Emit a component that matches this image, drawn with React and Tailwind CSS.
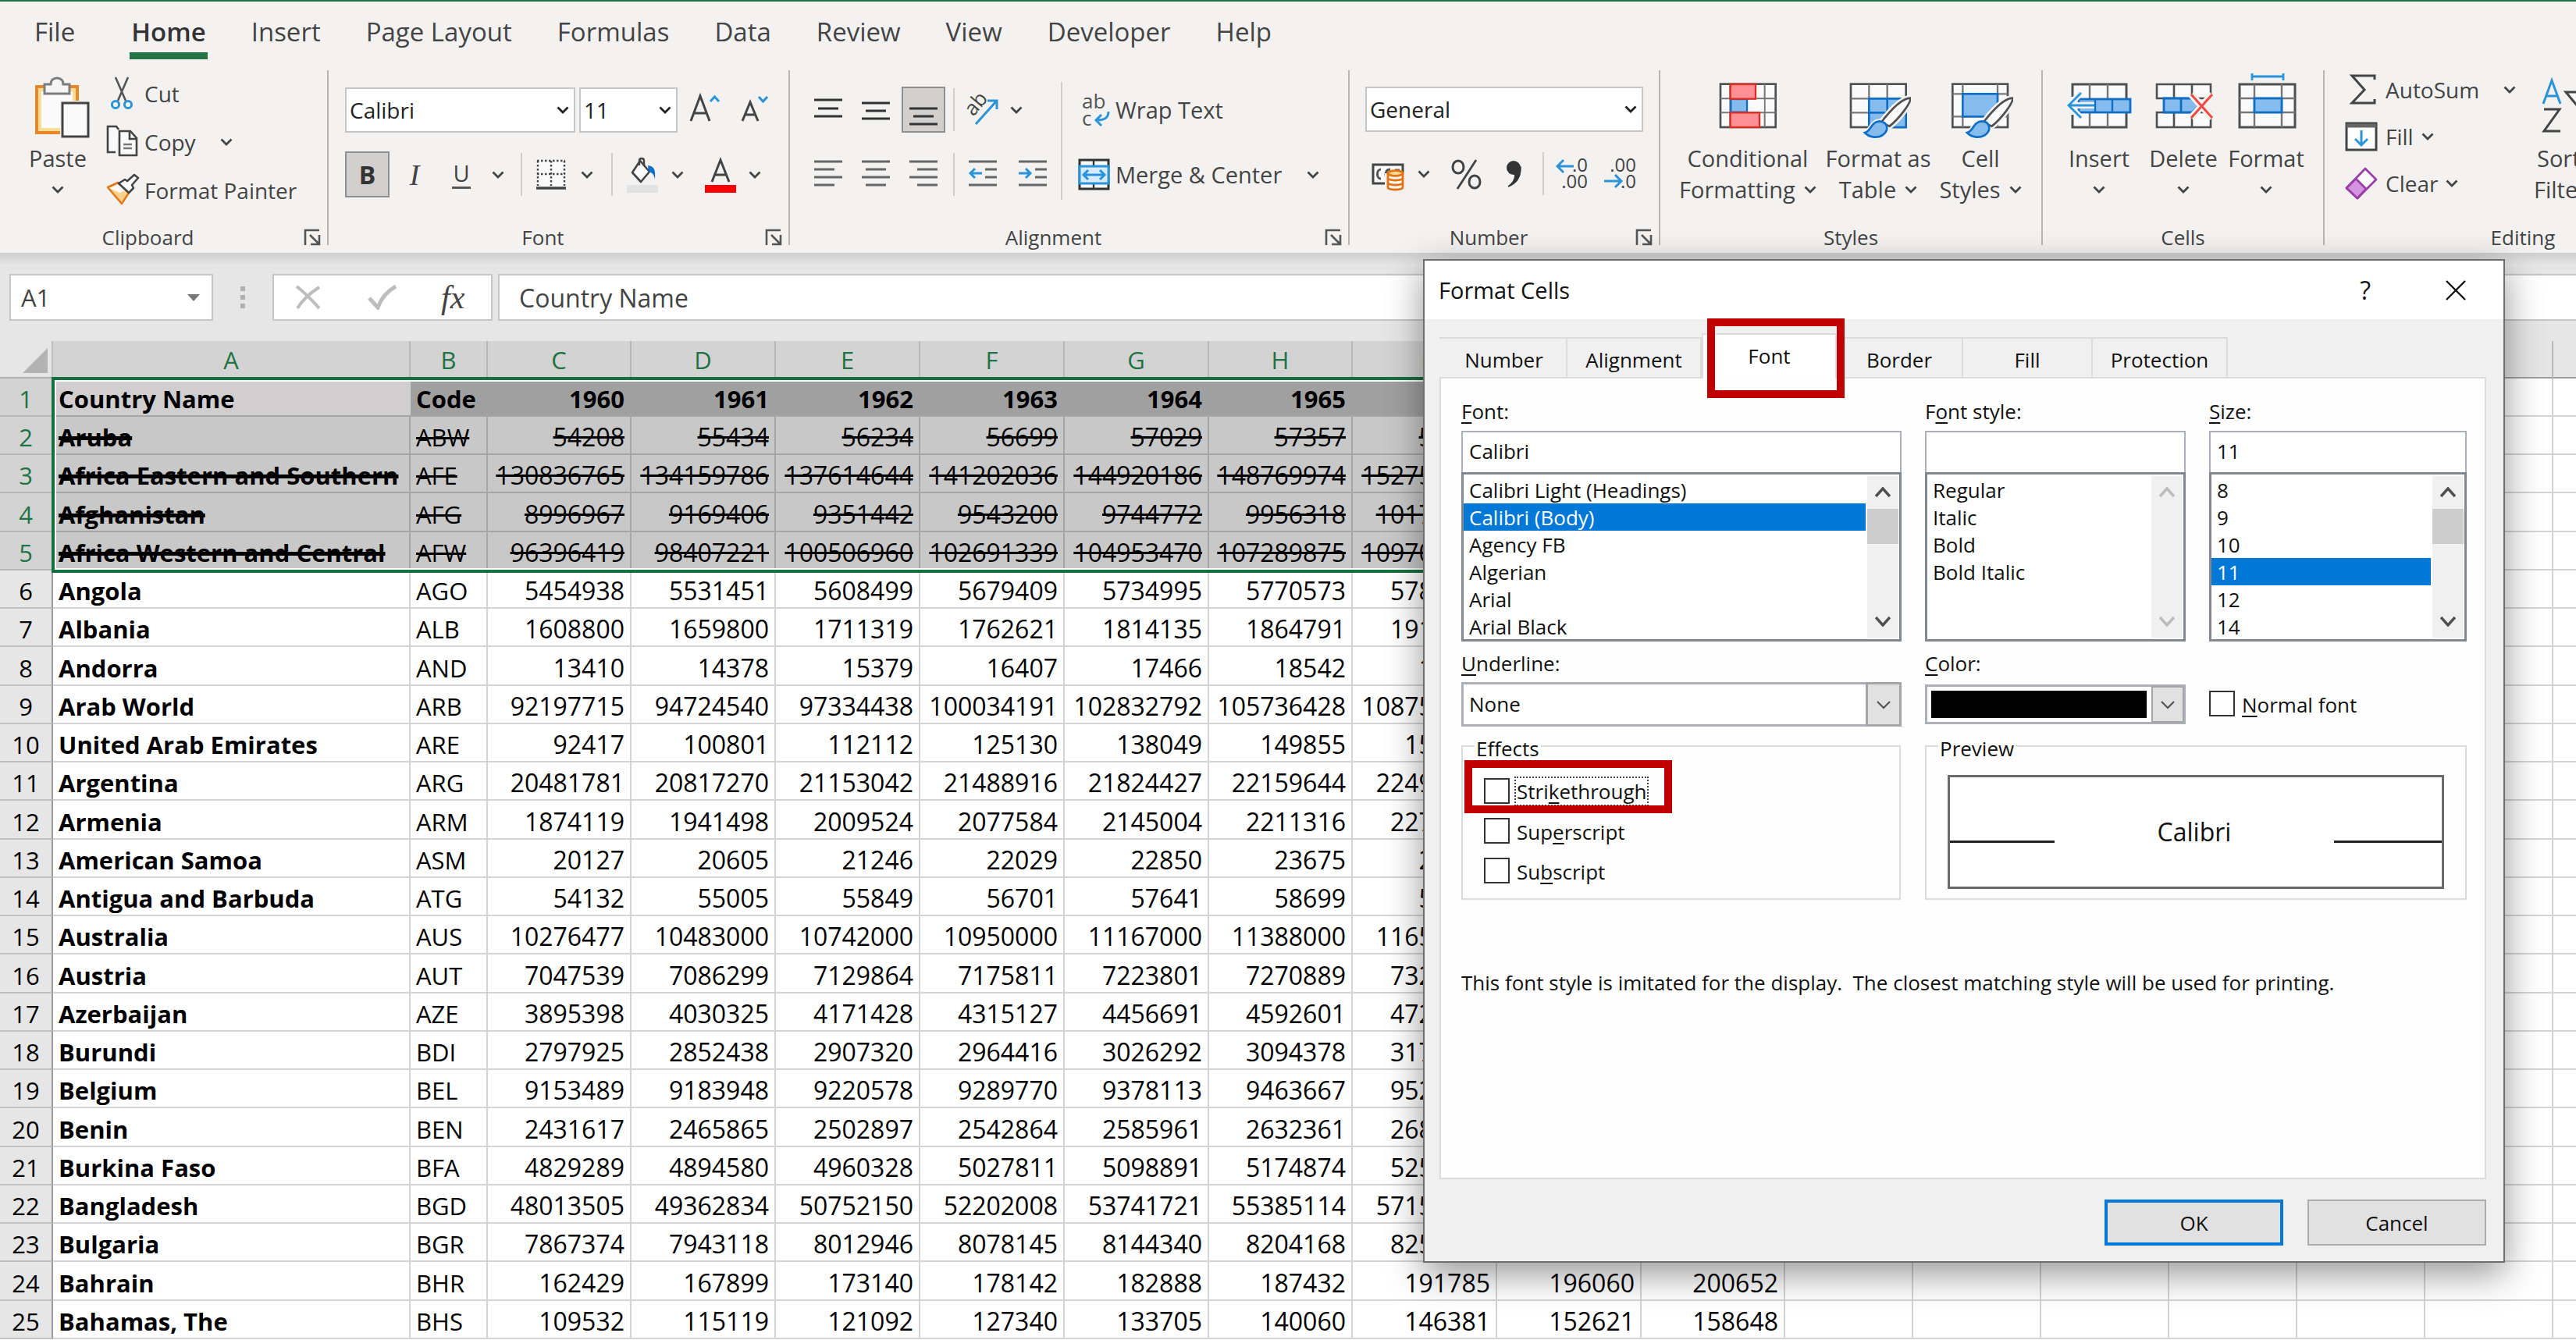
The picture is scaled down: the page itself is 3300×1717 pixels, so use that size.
import React from "react";

/* ---------- small shared drawings ---------- */

function Chevron({ className = "text-[#444]" }) {
  return (
    <svg width="16" height="10" viewBox="0 0 16 10" className={`shrink-0 ${className}`} aria-hidden="true">
      <path d="M1.5 1.5L8 8l6.5-6.5" fill="none" stroke="currentColor" strokeWidth="2.8" />
    </svg>
  );
}

function Icon({ w = 44, h = 44, children, box }) {
  return (
    <svg width={w} height={h} viewBox={box || `0 0 ${w} ${h}`} className="shrink-0" fill="none" aria-hidden="true">
      {children}
    </svg>
  );
}

const PasteIcon = () => (
  <Icon w={86} h={102} box="-12 0 86 102">
    <rect x="4" y="31" width="52" height="59" fill="#fafafa" stroke="#e8872a" strokeWidth="4" />
    <rect x="8" y="35" width="44" height="51" stroke="#fbdc94" strokeWidth="4" />
    <path d="M14 40V28h8c0-5 3-8 8-8s8 3 8 8h8v12z" fill="#f5f5f5" stroke="#7d7d7d" strokeWidth="3" />
    <rect x="34" y="49" width="39" height="49" fill="#f3f2f1" />
    <rect x="37" y="52" width="33" height="43" fill="#fafafa" stroke="#444" strokeWidth="3" />
  </Icon>
);

const CutIcon = () => (
  <Icon>
    <path d="M13 1l13 30M29 1L16 31" stroke="#555" strokeWidth="2.6" />
    <circle cx="13" cy="36" r="4.6" stroke="#2b93d8" strokeWidth="3" />
    <circle cx="29" cy="36" r="4.6" stroke="#2b93d8" strokeWidth="3" />
  </Icon>
);

const CopyIcon = () => (
  <Icon>
    <path d="M13 35H3V2h11l3 4" fill="#fafafa" stroke="#444" strokeWidth="2.6" />
    <path d="M18 8h14l8 9v22H18z" fill="#fafafa" stroke="#444" strokeWidth="2.6" />
    <path d="M31 8v10h9" stroke="#444" strokeWidth="2.6" />
    <path d="M23 25h11M23 30h11" stroke="#777" strokeWidth="2.4" />
  </Icon>
);

const PainterIcon = () => (
  <Icon>
    <path d="M3 18l13-6 14 13-9 14z" fill="#fbd28b" stroke="#e07b1c" strokeWidth="2.6" strokeLinejoin="round" />
    <path d="M5 19l12-5 9 8-8 3z" fill="#fafafa" />
    <path d="M17 13l8-5 3 2 9-8 5 4-8 9 2 4-6 6z" fill="#fafafa" stroke="#444" strokeWidth="2.6" strokeLinejoin="round" />
  </Icon>
);

const GrowFont = () => (
  <Icon w={42} h={44}>
    <path d="M2 36L14 4l12 32M6 26h16" stroke="#444" strokeWidth="3" />
    <path d="M27 11l5.500-6 5.500 6" stroke="#2b93d8" strokeWidth="3" />
  </Icon>
);

const ShrinkFont = () => (
  <Icon w={42} h={44}>
    <path d="M2 36l10-24 10 24M5 28h14" stroke="#444" strokeWidth="3" />
    <path d="M23 5l5.500 6L34 5" stroke="#2b93d8" strokeWidth="3" />
  </Icon>
);

const BordersIcon = () => (
  <Icon w={38} h={44}>
    <rect x="1" y="3" width="36" height="36" fill="#fafafa" />
    <path d="M1 4h36M1 21h36M2 4v32M19 4v32M36 4v32" stroke="#444" strokeWidth="2.4" strokeDasharray="2.500 2.500" />
    <path d="M0 39h38" stroke="#444" strokeWidth="3.500" />
  </Icon>
);

const BucketIcon = () => (
  <Icon w={42} h={48}>
    <path d="M18 6L8 21l11 12 11-13z" fill="#fafafa" stroke="#444" strokeWidth="2.6" strokeLinejoin="round" />
    <path d="M17 12V6c0-4 6-4 6 0v7" stroke="#444" strokeWidth="2.4" />
    <path d="M28 12c8 1 10 5 9 18-1-7-4-9-8-10z" fill="#0f6fc6" />
    <rect x="1" y="37" width="40" height="10" fill="#e3e3e3" />
  </Icon>
);

const FontColorIcon = () => (
  <Icon w={42} h={48}>
    <path d="M10 33L21 5l11 28M14 24h14" stroke="#444" strokeWidth="3" />
    <rect x="1" y="37" width="40" height="10" fill="#ff0000" />
  </Icon>
);

const bars = (list, color) =>
  list.map(([x1, x2, y]) => <path key={y} d={`M${x1} ${y}H${x2}`} stroke={color} strokeWidth="3" />);

const TopAlign = () => <Icon w={38}>{bars([[1, 37, 9], [6, 32, 20], [1, 37, 30]], "#333")}</Icon>;
const MidAlign = () => <Icon w={38}>{bars([[1, 37, 13], [6, 32, 23], [1, 37, 33]], "#333")}</Icon>;
const BotAlign = () => <Icon w={38}>{bars([[1, 37, 20], [6, 32, 30], [1, 37, 40]], "#333")}</Icon>;
const LeftAlign = () => <Icon w={38}>{bars([[1, 37, 5], [1, 27, 15], [1, 37, 25], [1, 27, 35]], "#666")}</Icon>;
const CenterAlign = () => <Icon w={38}>{bars([[1, 37, 5], [6, 32, 15], [1, 37, 25], [6, 32, 35]], "#666")}</Icon>;
const RightAlign = () => <Icon w={38}>{bars([[1, 37, 5], [11, 37, 15], [1, 37, 25], [11, 37, 35]], "#666")}</Icon>;

const Indent = ({ out }) => (
  <Icon w={38}>
    {bars([[1, 37, 5], [22, 37, 15], [22, 37, 25], [1, 37, 35]], "#666")}
    <path d={out ? "M18 20H3M9 14l-6 6 6 6" : "M1 20h15M10 14l6 6-6 6"} stroke="#2b93d8" strokeWidth="3" />
  </Icon>
);

const OrientationIcon = () => (
  <Icon>
    <text x="0" y="0" transform="translate(12 31) rotate(-50)" fontSize="26" fill="#444">ab</text>
    <path d="M15 40l26-29M30 10h12v11" stroke="#2b93d8" strokeWidth="3" />
  </Icon>
);

const WrapIcon = () => (
  <Icon w={42} h={48}>
    <text x="5" y="22" fontSize="26" fill="#555">ab</text>
    <text x="5" y="44" fontSize="26" fill="#555">c</text>
    <path d="M39 26c0 8-5 11-15 11M30 30l-7 7 7 7" stroke="#2b93d8" strokeWidth="3" />
  </Icon>
);

const MergeIcon = () => (
  <Icon w={42}>
    <rect x="2" y="3" width="37" height="37" fill="#fafafa" stroke="#333" strokeWidth="3" />
    <path d="M20 3v8M20 33v7" stroke="#333" strokeWidth="2.400" />
    <rect x="2" y="11" width="37" height="22" fill="#d9ebfa" stroke="#2b93d8" strokeWidth="3" />
    <path d="M7 22h27M13 16l-6 6 6 6M28 16l6 6-6 6" stroke="#2b93d8" strokeWidth="3" />
  </Icon>
);

const MoneyIcon = () => (
  <Icon>
    <rect x="2" y="10" width="38" height="24" fill="#fafafa" stroke="#444" strokeWidth="3" />
    <path d="M12 16c-6 0-6 12 0 12M24 16c-6 0-7 6-5 11M30 17h6" stroke="#555" strokeWidth="3" />
    <path d="M21 21v18c0 4 19 4 19 0V21" fill="#fafafa" stroke="#f3f2f1" strokeWidth="8" />
    <path d="M21 21v18c0 4 19 4 19 0V21" fill="#fafafa" stroke="#e5730f" strokeWidth="2.800" />
    <ellipse cx="30.500" cy="21" rx="9.500" ry="3.400" fill="#fbdc94" stroke="#e5730f" strokeWidth="2.800" />
    <path d="M21 27c0 4 19 4 19 0M21 33c0 4 19 4 19 0" stroke="#e5730f" strokeWidth="2.800" />
  </Icon>
);

const PercentIcon = () => (
  <Icon w={40}>
    <ellipse cx="9" cy="13" rx="7" ry="8" stroke="#444" strokeWidth="3" />
    <ellipse cx="30" cy="32" rx="7" ry="8" stroke="#444" strokeWidth="3" />
    <path d="M32 4L8 41" stroke="#444" strokeWidth="2.800" />
  </Icon>
);

const CommaIcon = () => (
  <Icon w={22}>
    <circle cx="10" cy="14" r="9" fill="#333" />
    <path d="M19 14c0 12-5 20-16 24 6-4 9-9 9-16z" fill="#333" stroke="#333" strokeWidth="1.500" />
  </Icon>
);

const DecimalIcon = ({ more }) => (
  <Icon w={42} h={44}>
    <text x="41" y="19" textAnchor="end" fontSize="24" fill="#444">{more ? ".0" : ".00"}</text>
    <text x="41" y="40" textAnchor="end" fontSize="24" fill="#444">{more ? ".00" : ".0"}</text>
    <path d={more ? "M23 12H2M10 4l-8 8 8 8" : "M0 31h22M14 23l8 8-8 8"} stroke="#2b93d8" strokeWidth="3" />
  </Icon>
);

/* ---------- large ribbon icons ---------- */

const Brush = () => (
  <g>
    <path d="M137 231C165 195 215 137 250 137c3 18-42 78-80 108z" fill="#fafafa" stroke="#f3f2f1" strokeWidth="24" />
    <path d="M75 270c24-4 22-42 56-44 32 2 38 34 14 52-18 14-52 12-70-8z" fill="#f3f2f1" stroke="#f3f2f1" strokeWidth="18" />
    <path d="M137 231C165 195 215 137 250 137c3 18-42 78-80 108z" fill="#fafafa" stroke="#505050" strokeWidth="8" />
    <path d="M75 270c24-4 22-42 56-44 32 2 38 34 14 52-18 14-52 12-70-8z" fill="#85bced" stroke="#0f6fc6" strokeWidth="8" />
  </g>
);

const ConditionalIcon = () => (
  <Icon w={80} h={102} box="0 0 240 306">
    <rect x="15" y="83" width="212" height="166" fill="#fafafa" stroke="#505050" strokeWidth="8" />
    <path d="M15 139h212M15 193h212M52 83v166M185 83v166" stroke="#777" strokeWidth="6" />
    <path d="M121 143h61v46h-61z" fill="#fafafa" />
    <rect x="55" y="141" width="62" height="50" fill="#85bced" stroke="#0f6fc6" strokeWidth="7" />
    <rect x="53" y="84" width="97" height="56" fill="#ff9196" stroke="#df2b22" strokeWidth="7" />
    <rect x="53" y="193" width="112" height="56" fill="#ff9196" stroke="#df2b22" strokeWidth="7" />
  </Icon>
);

const TableIcon = () => (
  <Icon w={84} h={102} box="0 0 252 306">
    <rect x="21" y="83" width="212" height="166" fill="#fafafa" stroke="#505050" strokeWidth="8" />
    <path d="M21 139h212M21 193h212M91 83v166M161 83v166" stroke="#777" strokeWidth="7" />
    <path d="M91 139h142v110H91zM91 193h142M161 139v110" fill="#85bced" stroke="#0f6fc6" strokeWidth="8" />
    <Brush />
  </Icon>
);

const CellStyleIcon = () => (
  <Icon w={84} h={102} box="0 0 252 306">
    <rect x="19" y="83" width="212" height="166" fill="#fafafa" stroke="#505050" strokeWidth="8" />
    <path d="M19 121h212M19 208h212M58 83v166M192 83v166" stroke="#777" strokeWidth="7" />
    <rect x="58" y="121" width="134" height="87" fill="#85bced" stroke="#0f6fc6" strokeWidth="8" />
    <Brush />
  </Icon>
);

const InsertIcon = () => (
  <Icon w={84} h={102}>
    <rect x="8" y="28" width="69" height="55" fill="#fafafa" stroke="#505050" strokeWidth="3" />
    <path d="M30 28v55M53 28v55" stroke="#777" strokeWidth="2.400" />
    <path d="M3 44h14v23H3z" fill="#f3f2f1" />
    <rect x="16" y="47" width="66" height="17" fill="#85bced" stroke="#0f6fc6" strokeWidth="2.800" />
    <path d="M37 47v17M59 47v17" stroke="#0f6fc6" strokeWidth="2.400" />
    <path d="M36 55H4M19 39L3 55l16 16" stroke="#f3f2f1" strokeWidth="8" />
    <path d="M36 55H4M19 39L3 55l16 16" stroke="#2b93d8" strokeWidth="2.800" />
  </Icon>
);

const DeleteIcon = () => (
  <Icon w={84} h={102}>
    <path d="M8 46V28h69v18H8zM8 64v19h69V64H8zM30 28v18M53 28v18M30 64v19M53 64v19" fill="#fafafa" stroke="#505050" strokeWidth="2.600" />
    <path d="M17 46h36l9 9-9 9H17zM39 46v18" fill="#85bced" stroke="#0f6fc6" strokeWidth="2.800" />
    <path d="M52 41l27 30M79 41L52 71" stroke="#f3f2f1" strokeWidth="9" />
    <path d="M52 41l27 30M79 41L52 71" stroke="#f04a42" strokeWidth="3" />
  </Icon>
);

const FormatIcon = () => (
  <Icon w={84} h={102}>
    <path d="M24 14v9M64 14v9M24 18h40" stroke="#2b93d8" strokeWidth="2.800" />
    <rect x="8" y="28" width="71" height="55" fill="#fafafa" stroke="#505050" strokeWidth="3" />
    <path d="M8 46h71M8 64h71M27 28v55M62 28v55" stroke="#777" strokeWidth="2.400" />
    <rect x="27" y="46" width="35" height="18" fill="#85bced" stroke="#0f6fc6" strokeWidth="2.800" />
  </Icon>
);

const SumIcon = () => (
  <Icon w={48}>
    <path d="M40 9V4H11l16 18L11 39h29v-5" stroke="#444" strokeWidth="3" />
  </Icon>
);

const FillIcon = () => (
  <Icon w={48}>
    <rect x="4" y="5" width="38" height="34" fill="#fff" stroke="#444" strokeWidth="3" />
    <path d="M4 8h38" stroke="#666" strokeWidth="5" />
    <path d="M23 14v19M15 25l8 8 8-8" stroke="#2b93d8" strokeWidth="3" />
  </Icon>
);

const ClearIcon = () => (
  <Icon w={48}>
    <path d="M28 3l14 14-24 24L4 28z" fill="#fafafa" stroke="#9a3fa8" strokeWidth="2.800" strokeLinejoin="round" />
    <path d="M16 16l13 13-11 12L4 28z" fill="#d594df" stroke="#9a3fa8" strokeWidth="2.800" strokeLinejoin="round" />
  </Icon>
);

const SortIcon = () => (
  <Icon w={90} h={102}>
    <path d="M2 53L13 23l11 30M6 43h14" stroke="#2b93d8" strokeWidth="3" />
    <path d="M3 60h20L3 88h21" stroke="#444" strokeWidth="3" />
    <path d="M31 38h40L56 56v20l-10 8V56z" fill="#fafafa" stroke="#444" strokeWidth="3" />
  </Icon>
);

/* ---------- ribbon ---------- */

const TABS = ["File", "Home", "Insert", "Page Layout", "Formulas", "Data", "Review", "View", "Developer", "Help"];

function TabBar() {
  return (
    <nav className="flex h-[78px] gap-[54px] pl-[42px] text-[33px]">
      {TABS.map((t) => (
        <button
          key={t}
          type="button"
          className={
            t === "Home"
              ? "flex flex-col whitespace-nowrap px-[2px] font-semibold text-[#333]"
              : t === "File"
                ? "mr-[14px] flex flex-col whitespace-nowrap px-[2px]"
                : "flex flex-col whitespace-nowrap px-[2px]"
          }
        >
          <span className="mt-[14px] h-[51px] leading-[50px]">{t}</span>
          {t === "Home" && <span className="-mx-[2px] h-[9px] self-stretch bg-[#217346]" />}
        </button>
      ))}
    </nav>
  );
}

function Launcher() {
  return (
    <button type="button" aria-label="More options" className="mr-[8px] w-[22px]">
      <svg width="22" height="22" viewBox="0 0 22 22" fill="none" aria-hidden="true">
        <path d="M2 21V2h18M8 8l11 11M20 8v12H9" stroke="#555" strokeWidth="2.600" />
      </svg>
    </button>
  );
}

function Group({ label, width, launcher, children, last }) {
  return (
    <section className={`flex shrink-0 ${width}`} aria-label={label}>
      <div className="flex min-w-0 flex-1 flex-col">
        <div className="flex h-[206px]">{children}</div>
        <div className="flex h-[36px] items-center text-[26px]">
          <span className="flex-1 text-center">{label}</span>
          {launcher && <span className="flex w-[40px] justify-end"><Launcher /></span>}
        </div>
      </div>
      {!last && <div className="mt-[10px] h-[224px] w-[2px] bg-[#b8b6b4]" />}
    </section>
  );
}

function BigButton({ icon, lines, width }) {
  return (
    <button type="button" className={`flex shrink-0 flex-col items-center text-[29px] leading-[42px] ${width}`}>
      {icon}
      <span className="whitespace-nowrap">{lines[0]}</span>
      <span className="flex h-[38px] items-center gap-[11px] whitespace-nowrap">
        {lines[1]}
        <Chevron />
      </span>
    </button>
  );
}

function RowButton({ icon, label, chevron, gap = "ml-[6px]", chevGap = "ml-[24px]", height = "h-[62px]" }) {
  return (
    <button type="button" className={`flex items-center whitespace-nowrap ${height}`}>
      {icon}
      <span className={gap}>{label}</span>
      {chevron && <span className={chevGap}><Chevron /></span>}
    </button>
  );
}

function Combo({ label, options, width }) {
  return (
    <div className={`relative h-[58px] shrink-0 ${width}`}>
      <select
        aria-label={label}
        className="size-full appearance-none border-2 border-[#c6c6c6] bg-white pl-[4px] text-[28px] text-[#222]"
      >
        {options.map((o) => <option key={o}>{o}</option>)}
      </select>
      <span className="pointer-events-none absolute inset-y-0 right-[8px] flex items-center"><Chevron className="text-[#222]" /></span>
    </div>
  );
}

function Tool({ label, width, active, children }) {
  return (
    <button
      type="button"
      aria-label={label}
      className={`flex h-[59px] shrink-0 items-center justify-center ${width} ${active ? "border-2 border-[#8f8f8f] bg-[#d2d0ce]" : ""}`}
    >
      {children}
    </button>
  );
}

const Sep = () => <span className="h-[55px] w-[2px] shrink-0 bg-[#d0cecc]" />;

function Ribbon() {
  return (
    <div className="flex h-[244px] overflow-hidden">
      <Group label="Clipboard" width="w-[421px]" launcher>
        <div className="flex pl-[20px]">
          <BigButton icon={<PasteIcon />} lines={["Paste", ""]} width="w-[108px]" />
        </div>
        <div className="ml-[7px] flex flex-col items-start pt-[9px] text-[28px]">
          <RowButton icon={<CutIcon />} label="Cut" />
          <RowButton icon={<CopyIcon />} label="Copy" chevron chevGap="ml-[31px]" />
          <RowButton icon={<PainterIcon />} label="Format Painter" />
        </div>
      </Group>

      <Group label="Font" width="w-[591px]" launcher>
        <div className="flex flex-col gap-[24px] pl-[21px] pt-[31px]">
          <div className="flex items-center">
            <Combo label="Font name" options={["Calibri"]} width="w-[295px]" />
            <span className="w-[5px]" />
            <Combo label="Font size" options={["11"]} width="w-[126px]" />
            <span className="w-[15px]" />
            <Tool label="Increase font size" width="w-[42px]"><GrowFont /></Tool>
            <span className="w-[24px]" />
            <Tool label="Decrease font size" width="w-[42px]"><ShrinkFont /></Tool>
          </div>
          <div className="flex items-center">
            <Tool label="Bold" width="w-[57px]" active><span className="text-[32px] font-bold leading-[40px] text-[#333]">B</span></Tool>
            <Tool label="Italic" width="w-[64px]"><span className="font-['Liberation_Serif',serif] text-[38px] italic leading-[40px]">I</span></Tool>
            <Tool label="Underline" width="w-[56px]"><span className="border-b-[3px] border-[#555] px-px text-[29px] leading-[34px]">U</span></Tool>
            <Tool label="Underline options" width="w-[38px]"><Chevron /></Tool>
            <span className="w-[10px]" />
            <Sep />
            <span className="w-[17px]" />
            <Tool label="Borders" width="w-[40px]"><BordersIcon /></Tool>
            <Tool label="Border options" width="w-[52px]"><Chevron /></Tool>
            <span className="w-[5px]" />
            <Sep />
            <span className="w-[17px]" />
            <Tool label="Fill color" width="w-[42px]"><BucketIcon /></Tool>
            <Tool label="Fill color options" width="w-[48px]"><Chevron /></Tool>
            <span className="w-[10px]" />
            <Tool label="Font color" width="w-[42px]"><FontColorIcon /></Tool>
            <Tool label="Font color options" width="w-[46px]"><Chevron /></Tool>
          </div>
        </div>
      </Group>

      <Group label="Alignment" width="w-[717px]" launcher>
        <div className="flex flex-col gap-[24px] pl-[21px] pt-[31px]">
          <div className="flex items-center gap-[5px]">
            <Tool label="Top align" width="w-[56px]"><TopAlign /></Tool>
            <Tool label="Middle align" width="w-[56px]"><MidAlign /></Tool>
            <Tool label="Bottom align" width="w-[56px]" active><BotAlign /></Tool>
            <span className="w-0" />
            <Sep />
            <Tool label="Orientation" width="w-[58px]"><OrientationIcon /></Tool>
            <Tool label="Orientation options" width="w-[22px]"><Chevron /></Tool>
          </div>
          <div className="flex items-center gap-[5px]">
            <Tool label="Align left" width="w-[56px]"><LeftAlign /></Tool>
            <Tool label="Center" width="w-[56px]"><CenterAlign /></Tool>
            <Tool label="Align right" width="w-[56px]"><RightAlign /></Tool>
            <span className="w-0" />
            <Sep />
            <Tool label="Decrease indent" width="w-[62px]"><Indent out /></Tool>
            <Tool label="Increase indent" width="w-[56px]"><Indent /></Tool>
          </div>
        </div>
        <span className="ml-[8px] mt-[25px] h-[151px] w-[2px] bg-[#d0cecc]" />
        <div className="flex flex-col items-start gap-[24px] pl-[20px] pt-[31px] text-[29px]">
          <RowButton icon={<WrapIcon />} label="Wrap Text" height="h-[59px]" gap="ml-[6px]" />
          <RowButton icon={<MergeIcon />} label="Merge & Center" height="h-[59px]" gap="ml-[6px]" chevron chevGap="ml-[32px]" />
        </div>
      </Group>

      <Group label="Number" width="w-[398px]" launcher>
        <div className="flex flex-col gap-[24px] pl-[20px] pt-[31px]">
          <Combo label="Number format" options={["General"]} width="w-[356px]" />
          <div className="flex items-center">
            <span className="w-[8px]" />
            <Tool label="Accounting format" width="w-[44px]"><MoneyIcon /></Tool>
            <Tool label="Accounting options" width="w-[46px]"><Chevron /></Tool>
            <span className="w-[12px]" />
            <Tool label="Percent style" width="w-[40px]"><PercentIcon /></Tool>
            <span className="w-[30px]" />
            <Tool label="Comma style" width="w-[22px]"><CommaIcon /></Tool>
            <span className="w-[25px]" />
            <Sep />
            <span className="w-[15px]" />
            <Tool label="Increase decimal" width="w-[42px]"><DecimalIcon more /></Tool>
            <span className="w-[20px]" />
            <Tool label="Decrease decimal" width="w-[42px]"><DecimalIcon /></Tool>
          </div>
        </div>
      </Group>

      <Group label="Styles" width="w-[490px]">
        <div className="flex pl-[22px]">
          <BigButton icon={<ConditionalIcon />} lines={["Conditional", "Formatting"]} width="w-[180px]" />
          <BigButton icon={<TableIcon />} lines={["Format as", "Table"]} width="w-[154px]" />
          <BigButton icon={<CellStyleIcon />} lines={["Cell", "Styles"]} width="w-[108px]" />
        </div>
      </Group>

      <Group label="Cells" width="w-[361px]">
        <div className="flex pl-[18px]">
          <BigButton icon={<InsertIcon />} lines={["Insert", ""]} width="w-[108px]" />
          <BigButton icon={<DeleteIcon />} lines={["Delete", ""]} width="w-[108px]" />
          <BigButton icon={<FormatIcon />} lines={["Format", ""]} width="w-[104px]" />
        </div>
      </Group>

      <Group label="Editing" width="w-[508px]" last>
        <div className="flex w-[260px] flex-col items-start pl-[24px] pt-[5px] text-[28px]">
          <RowButton icon={<SumIcon />} label="AutoSum" height="h-[60px]" chevron chevGap="ml-[31px]" />
          <RowButton icon={<FillIcon />} label="Fill" height="h-[60px]" chevron chevGap="ml-[10px]" />
          <RowButton icon={<ClearIcon />} label="Clear" height="h-[60px]" chevron chevGap="ml-[10px]" />
        </div>
        <button type="button" className="flex shrink-0 flex-col items-start pl-[8px] text-[29px] leading-[42px]">
          <span className="h-[102px] pl-[10px]"><SortIcon /></span>
          <span className="whitespace-nowrap pl-[4px]">Sort &amp;</span>
          <span className="flex h-[38px] items-center gap-[11px] whitespace-nowrap">Filter <Chevron /></span>
        </button>
      </Group>
    </div>
  );
}

/* ---------- formula bar ---------- */

function FormulaBar() {
  return (
    <div className="flex h-[113px] shrink-0 items-start bg-[#e6e6e6] bg-[linear-gradient(#cfcfcf,#e6e6e6_16px)] pl-[12px] pt-[27px] text-[#444]">
      <div className="relative h-[60px] w-[261px] shrink-0">
        <input
          aria-label="Name box"
          defaultValue="A1"
          className="size-full border-2 border-[#c6c6c6] bg-white pl-[13px] text-[31px]"
        />
        <svg width="16" height="10" viewBox="0 0 16 10" className="absolute right-[17px] top-[26px]" aria-hidden="true">
          <path d="M0 0h16L8 9z" fill="#777" />
        </svg>
      </div>
      <div className="mx-[35px] flex h-[60px] w-[6px] shrink-0 flex-col items-center justify-center gap-[5px]">
        <span className="size-[6px] bg-[#b0b0b0]" />
        <span className="size-[6px] bg-[#b0b0b0]" />
        <span className="size-[6px] bg-[#b0b0b0]" />
      </div>
      <div className="flex h-[60px] w-[282px] shrink-0 items-center border-2 border-[#c6c6c6] bg-white">
        <button type="button" aria-label="Cancel entry" className="ml-[27px] w-[34px]">
          <Icon w={34} h={32}><path d="M2 2c8 6 20 18 29 28M31 3C20 10 9 20 3 30" stroke="#bdbdbd" strokeWidth="4" /></Icon>
        </button>
        <button type="button" aria-label="Enter" className="ml-[59px] w-[38px]">
          <Icon w={38} h={32}><path d="M2 17l11 12C17 18 25 8 36 2" stroke="#bdbdbd" strokeWidth="5" /></Icon>
        </button>
        <button type="button" aria-label="Insert function" className="ml-[56px] font-['Liberation_Serif',serif] text-[42px] italic leading-[48px] text-[#444]">
          fx
        </button>
      </div>
      <input
        aria-label="Formula"
        defaultValue="Country Name"
        className="ml-[7px] h-[60px] min-w-0 flex-1 border-2 border-r-0 border-[#c6c6c6] bg-white pl-[25px] text-[32px]"
      />
    </div>
  );
}

/* ---------- sheet ---------- */

const HEAD = ["Country Name", "Code", "1960", "1961", "1962", "1963", "1964", "1965", "1966", "", ""];
const DATA = `Aruba|ABW|54208|55434|56234|56699|57029|57357|57702||
Africa Eastern and Southern|AFE|130836765|134159786|137614644|141202036|144920186|148769974|152752671||
Afghanistan|AFG|8996967|9169406|9351442|9543200|9744772|9956318|10174840||
Africa Western and Central|AFW|96396419|98407221|100506960|102691339|104953470|107289875|109701811||
Angola|AGO|5454938|5531451|5608499|5679409|5734995|5770573|5781305||
Albania|ALB|1608800|1659800|1711319|1762621|1814135|1864791|1914573||
Andorra|AND|13410|14378|15379|16407|17466|18542|19646||
Arab World|ARB|92197715|94724540|97334438|100034191|102832792|105736428|108758634||
United Arab Emirates|ARE|92417|100801|112112|125130|138049|149855|159979||
Argentina|ARG|20481781|20817270|21153042|21488916|21824427|22159644|22494031||
Armenia|ARM|1874119|1941498|2009524|2077584|2145004|2211316|2276038||
American Samoa|ASM|20127|20605|21246|22029|22850|23675|24473||
Antigua and Barbuda|ATG|54132|55005|55849|56701|57641|58699|59912||
Australia|AUS|10276477|10483000|10742000|10950000|11167000|11388000|11651000||
Austria|AUT|7047539|7086299|7129864|7175811|7223801|7270889|7322066||
Azerbaijan|AZE|3895398|4030325|4171428|4315127|4456691|4592601|4721525||
Burundi|BDI|2797925|2852438|2907320|2964416|3026292|3094378|3170496||
Belgium|BEL|9153489|9183948|9220578|9289770|9378113|9463667|9527807||
Benin|BEN|2431617|2465865|2502897|2542864|2585961|2632361|2682159||
Burkina Faso|BFA|4829289|4894580|4960328|5027811|5098891|5174874|5256360||
Bangladesh|BGD|48013505|49362834|50752150|52202008|53741721|55385114|57157651||
Bulgaria|BGR|7867374|7943118|8012946|8078145|8144340|8204168|8258057||
Bahrain|BHR|162429|167899|173140|178142|182888|187432|191785|196060|200652
Bahamas, The|BHS|109532|115119|121092|127340|133705|140060|146381|152621|158648`
  .split("\n")
  .map((line) => line.split("|"));

const COLS = "ABCDEFGHIJKLMNOPQR".split("");
const EXTRA = COLS.slice(11);

function ColHeader({ name, selected }) {
  return (
    <th
      scope="col"
      className={
        selected
          ? "border-b-2 border-r-2 border-b-[#9f9f9f] border-r-[#b8b8b8] bg-[#d3d3d3] p-0 pt-[2px] font-normal text-[#217346]"
          : "border-b-2 border-r-2 border-b-[#9f9f9f] border-r-[#b8b8b8] bg-[#e6e6e6] p-0 pt-[2px] font-normal"
      }
    >
      {name}
    </th>
  );
}

function Cell({ row, col, value }) {
  const selected = row < 5;
  const classes = ["overflow-hidden whitespace-nowrap border-b-2 p-0 pt-[5px]"];
  classes.push(col < 2 ? "pl-[7px] text-left text-[31px]" : "text-right");
  if (col >= 2) classes.push(row === 0 ? "pr-[9px] text-[31px]" : "pr-[7px] text-[32px]");
  if (col === 0 || row === 0) classes.push("font-bold");
  if (row === 0) {
    classes.push(col === 0 ? "border-r-0 border-[#a6a6a6] bg-[#d0cece]" : "border-r-0 border-[#a6a6a6] bg-[#a0a0a0]");
  } else if (selected) {
    classes.push("border-r-2 border-[#a6a6a6] bg-[#c8c8c8] line-through");
    classes.push(col === 0 ? "decoration-[5px]" : "decoration-[3px]");
  } else {
    classes.push("border-r-2 border-[#d4d4d4]");
  }
  return <td className={classes.join(" ")}>{value}</td>;
}

function Sheet() {
  return (
    <div className="relative overflow-hidden bg-white text-black">
      <table className="w-[3435px] min-w-full table-fixed border-separate border-spacing-0 text-[31px] leading-[42px]">
        <colgroup>
          <col className="w-[68px]" />
          <col className="w-[458px]" />
          <col className="w-[99px]" />
          {COLS.slice(2, 11).map((c) => (
            <col key={c} className={"CHK".includes(c) ? "w-[184px]" : "w-[185px]"} />
          ))}
          {EXTRA.slice(0, -1).map((c) => <col key={c} className="w-[164px]" />)}
          <col />
        </colgroup>
        <thead>
          <tr className="h-[48px]">
            <th className="border-b-2 border-r-2 border-b-[#b0b0b0] border-r-[#c0c0c0] bg-[#e6e6e6] p-0" aria-label="Select all">
              <svg width="32" height="32" viewBox="0 0 32 32" className="ml-auto mr-[5px] mt-[4px]" aria-hidden="true">
                <path d="M32 0v32H0z" fill="#b3b3b3" />
              </svg>
            </th>
            {COLS.map((c, i) => <ColHeader key={c} name={c} selected={i < 11} />)}
          </tr>
        </thead>
        <tbody>
          {[HEAD, ...DATA].map((cells, r) => (
            <tr key={r} className={r % 4 === 3 ? "h-[50px]" : "h-[49px]"}>
              <th
                scope="row"
                className={
                  r < 5
                    ? "border-b-2 border-r-2 border-b-[#b8b8b8] border-r-[#9b9b9b] bg-[#d3d3d3] p-0 pt-[5px] font-normal text-[#217346]"
                    : "border-b-2 border-r-2 border-b-[#c0c0c0] border-r-[#9b9b9b] bg-[#e6e6e6] p-0 pt-[5px] font-normal"
                }
              >
                {r + 1}
              </th>
              {cells.map((v, c) => <Cell key={c} row={r} col={c} value={v} />)}
              {EXTRA.map((c) => <td key={c} className="border-b-2 border-r-2 border-[#d4d4d4] p-0" />)}
            </tr>
          ))}
        </tbody>
      </table>
      <div className="pointer-events-none absolute left-[66px] top-[46px] h-[251px] w-[2224px] border-4 border-[#157040]">
        <div className="size-full border-2 border-white" />
      </div>
    </div>
  );
}

/* ---------- Format Cells dialog ---------- */

function Arrow({ up, muted }) {
  return (
    <svg width="20" height="14" viewBox="0 0 20 14" className={muted ? "text-[#bcbcbc]" : "text-[#505050]"} aria-hidden="true">
      <path d={up ? "M1 12l9-10 9 10" : "M1 2l9 10 9-10"} fill="none" stroke="currentColor" strokeWidth="3.500" />
    </svg>
  );
}

function ListField({ id, label, value, items, selected, muted }) {
  return (
    <div>
      <label htmlFor={id} className="block h-[36px] leading-[36px]">{label}</label>
      <input id={id} defaultValue={value} className="mt-[7px] block h-[53px] w-full border-2 border-b-0 border-[#adb0b8] bg-white pb-[3px] pl-[8px]" />
      <div className="flex h-[217px] justify-between border-[3px] border-[#828790] bg-white">
        <ul role="listbox" aria-label={value || "Font style"} className="min-w-0 flex-1 pt-[2px]">
          {items.map((it) => (
            <li
              key={it}
              role="option"
              aria-selected={it === selected}
              className={it === selected ? "h-[35px] bg-[#0078d7] pl-[7px] leading-[37px] text-white" : "h-[35px] pl-[7px] leading-[37px]"}
            >
              {it}
            </li>
          ))}
        </ul>
        <div className="ml-[2px] mr-[1px] mt-[2px] flex h-[207px] w-[40px] flex-col items-center bg-[#f0f0f0]">
          <span className="flex h-[42px] items-center"><Arrow up muted={muted} /></span>
          {!muted && <span className="h-[45px] w-full bg-[#cdcdcd]" />}
          <span className="mt-auto flex h-[42px] items-center"><Arrow muted={muted} /></span>
        </div>
      </div>
    </div>
  );
}

const U = ({ children }) => <span className="underline decoration-2 underline-offset-4">{children}</span>;

function CheckBox({ id, children, focus }) {
  return (
    <div className="relative flex h-[51px] items-center">
      <input id={id} type="checkbox" className="size-[33px] shrink-0 appearance-none border-[2px] border-[#333] bg-white" />
      <label
        htmlFor={id}
        className={focus ? "ml-[6px] border-2 border-dotted border-[#444] px-px leading-[34px]" : "ml-[7px] px-[2px] pt-[2px] leading-[34px]"}
      >
        {children}
      </label>
      {focus && <span className="pointer-events-none absolute -left-[25px] -top-[14px] h-[68px] w-[266px] border-[10px] border-[#c00000]" />}
    </div>
  );
}

function DropArrow() {
  return (
    <svg width="18" height="12" viewBox="0 0 18 12" aria-hidden="true">
      <path d="M1 2l8 8 8-8" fill="none" stroke="#505050" strokeWidth="2" />
    </svg>
  );
}

const DIALOG_TABS = [
  ["Number", "pl-[3px] w-[164px]"],
  ["Alignment", "w-[172px]"],
  ["Font", "w-[173px]"],
  ["Border", "w-[162px]"],
  ["Fill", "w-[166px]"],
  ["Protection", "w-[173px]"],
];

function DialogTabs() {
  return (
    <div role="tablist" className="flex h-[76px] items-end">
      {DIALOG_TABS.map(([name, w]) =>
        name === "Font" ? (
          <div key={name} className={`relative h-[58px] shrink-0 ${w}`}>
            <button role="tab" aria-selected="true" type="button" className="size-full border-2 border-b-0 border-[#dcdcdc] bg-white pb-[2px]">
              {name}
            </button>
            <span className="pointer-events-none absolute -top-[19px] left-[7px] z-10 h-[102px] w-[176px] border-[10px] border-[#c00000]" />
          </div>
        ) : (
          <button
            key={name}
            role="tab"
            aria-selected="false"
            type="button"
            className={`h-[53px] shrink-0 border-r-2 border-t-2 border-[#dcdcdc] pt-[4px] ${w}`}
          >
            {name}
          </button>
        )
      )}
    </div>
  );
}

function FormatDialog() {
  return (
    <div
      role="dialog"
      aria-label="Format Cells"
      className="absolute left-[1823px] top-[332px] w-[1386px] border-2 border-[#6e6e6e] bg-[#f0f0f0] text-[26px] text-[#111] shadow-[0_14px_44px_rgba(0,0,0,0.42)]"
    >
      <div className="flex h-[75px] items-center bg-white pl-[18px]">
        <h1 className="flex-1 text-[29px]">Format Cells</h1>
        <button type="button" aria-label="Help" className="mr-[95px] text-[32px] leading-[40px]">?</button>
        <button type="button" aria-label="Close" className="mr-[47px]">
          <Icon w={28} h={28}><path d="M2 2l24 24M26 2L2 26" stroke="#111" strokeWidth="2.400" /></Icon>
        </button>
      </div>
      <div className="pb-[20px] pl-[19px] pr-[22px]">
        <DialogTabs />
        <div className="-mt-[2px] h-[1028px] border-2 border-[#dcdcdc] bg-[#fefefe] pl-[26px] pr-[23px] pt-[24px]">
          <div className="grid grid-cols-[564px_334px_1fr] gap-x-[30px]">
            <ListField
              id="font"
              label={<><U>F</U>ont:</>}
              value="Calibri"
              items={["Calibri Light (Headings)", "Calibri (Body)", "Agency FB", "Algerian", "Arial", "Arial Black"]}
              selected="Calibri (Body)"
            />
            <ListField
              id="style"
              label={<>F<U>o</U>nt style:</>}
              value=""
              items={["Regular", "Italic", "Bold", "Bold Italic"]}
              muted
            />
            <ListField
              id="size"
              label={<><U>S</U>ize:</>}
              value="11"
              items={["8", "9", "10", "11", "12", "14"]}
              selected="11"
            />
          </div>

          <div className="mt-[10px] grid grid-cols-[564px_334px_1fr] items-end gap-x-[30px]">
            <div>
              <label htmlFor="underline" className="block h-[42px] leading-[36px]"><U>U</U>nderline:</label>
              <div className="relative h-[57px]">
                <select id="underline" className="size-full appearance-none border-[3px] border-[#adb0b8] bg-white pl-[7px]">
                  <option>None</option>
                </select>
                <span className="pointer-events-none absolute inset-y-0 right-0 flex w-[46px] items-center justify-center border-[3px] border-[#a5a5a5] bg-[#e1e1e1]">
                  <DropArrow />
                </span>
              </div>
            </div>
            <div>
              <label htmlFor="color" className="block h-[45px] leading-[36px]"><U>C</U>olor:</label>
              <button id="color" type="button" className="mb-[3px] flex h-[51px] w-full items-stretch border-[3px] border-[#adb0b8] bg-white">
                <span className="my-[5px] ml-[5px] flex-1 bg-black" />
                <span className="-my-[1px] -mr-[1px] ml-[6px] flex w-[42px] items-center justify-center border-2 border-[#a5a5a5] bg-[#e1e1e1]">
                  <DropArrow />
                </span>
              </button>
            </div>
            <div className="pb-[4px]">
              <CheckBox id="normal"><U>N</U>ormal font</CheckBox>
            </div>
          </div>

          <div className="mt-[10px] grid grid-cols-[563px_1fr] gap-x-[31px]">
            <fieldset className="h-[212px] border-2 border-[#dcdcdc] pl-[27px]">
              <legend className="-ml-[12px] h-[30px] px-[2px] leading-[36px]">Effects</legend>
              <div className="pt-[17px]">
                <CheckBox id="strike" focus>Stri<U>k</U>ethrough</CheckBox>
                <CheckBox id="super">Sup<U>e</U>rscript</CheckBox>
                <CheckBox id="sub">Su<U>b</U>script</CheckBox>
              </div>
            </fieldset>
            <fieldset className="h-[212px] border-2 border-[#dcdcdc] px-[27px]">
              <legend className="-ml-[12px] h-[30px] px-[2px] leading-[36px]">Preview</legend>
              <div className="mt-[22px] flex h-[146px] items-center justify-between border-[3px] border-[#6a6a6a] bg-white">
                <span className="mt-[25px] h-[3px] w-[134px] bg-[#222]" />
                <span className="text-[32px]">Calibri</span>
                <span className="mt-[25px] h-[3px] w-[138px] bg-[#222]" />
              </div>
            </fieldset>
          </div>

          <p className="mt-[88px] whitespace-pre leading-[36px]">
            {"This font style is imitated for the display.  The closest matching style will be used for printing."}
          </p>
        </div>
        <div className="mt-[26px] flex justify-end gap-[31px]">
          <button type="button" className="h-[59px] w-[229px] border-4 border-[#0078d7] bg-[#e1e1e1] pt-[2px]">OK</button>
          <button type="button" className="h-[59px] w-[229px] border-2 border-[#adadad] bg-[#e1e1e1] pt-[2px]">Cancel</button>
        </div>
      </div>
    </div>
  );
}

export default function App() {
  return (
    <div className="relative min-h-screen overflow-hidden bg-white font-['Open_Sans',sans-serif] text-[#444]">
      <header className="bg-[#f3f2f1]">
        <div className="h-[2px] bg-[#217346]" />
        <TabBar />
        <Ribbon />
      </header>
      <FormulaBar />
      <Sheet />
      <FormatDialog />
    </div>
  );
}
